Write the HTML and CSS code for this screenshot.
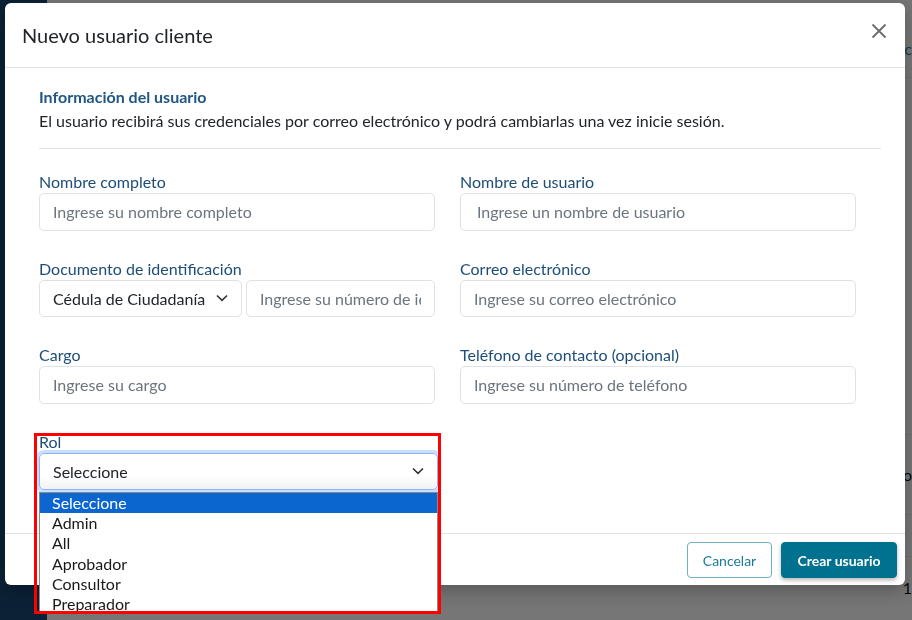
FILE: index.html
```html
<!DOCTYPE html>
<html lang="es">
<head>
    <meta charset="UTF-8">
    <meta name="viewport" content="width=device-width, initial-scale=1.0">
    <title>Nuevo usuario cliente</title>
    <link rel="stylesheet" href="styles.css">
</head>
<body>
    <div class="app">
        <aside class="sidebar"></aside>
        <main class="page">
            <div class="page-row first">
                <span class="page-link">c</span>
            </div>
            <div class="page-row tall"></div>
            <div class="page-row mid">
                <span>o</span>
            </div>
            <div class="page-row thin"></div>
            <div class="page-row last">
                <span>1</span>
            </div>
        </main>
    </div>

    <div class="backdrop"></div>

    <div class="modal">
        <div class="modal-header">
            <h1 class="modal-title">Nuevo usuario cliente</h1>
            <button class="close-btn" aria-label="Cerrar">
                <svg width="16" height="16" viewBox="0 0 16 16">
                    <path d="M1.5 1.5 L14.5 14.5 M14.5 1.5 L1.5 14.5" stroke="#6b6b6b" stroke-width="1.8" fill="none"/>
                </svg>
            </button>
        </div>

        <div class="modal-body">
            <h2 class="section-title">Información del usuario</h2>
            <p class="section-text">El usuario recibirá sus credenciales por correo electrónico y podrá cambiarlas una vez inicie sesión.</p>
            <hr class="divider">

            <div class="form-grid">
                <div class="field">
                    <label>Nombre completo</label>
                    <input class="input" type="text" placeholder="Ingrese su nombre completo">
                </div>
                <div class="field">
                    <label>Nombre de usuario</label>
                    <input class="input indent" type="text" placeholder="Ingrese un nombre de usuario">
                </div>

                <div class="field">
                    <label>Documento de identificación</label>
                    <div class="doc-row">
                        <div class="input select doc-type">
                            <span>Cédula de Ciudadanía</span>
                            <svg class="chevron" width="12" height="8" viewBox="0 0 12 8">
                                <path d="M1 1.5 L6 6.3 L11 1.5" stroke="#333" stroke-width="1.6" fill="none"/>
                            </svg>
                        </div>
                        <input class="input doc-number" type="text" placeholder="Ingrese su número de identificación">
                    </div>
                </div>
                <div class="field">
                    <label>Correo electrónico</label>
                    <input class="input" type="email" placeholder="Ingrese su correo electrónico">
                </div>

                <div class="field">
                    <label>Cargo</label>
                    <input class="input" type="text" placeholder="Ingrese su cargo">
                </div>
                <div class="field">
                    <label>Teléfono de contacto (opcional)</label>
                    <input class="input" type="tel" placeholder="Ingrese su número de teléfono">
                </div>

                <div class="field rol-field">
                    <label>Rol</label>
                    <div class="input select focused">
                        <span>Seleccione</span>
                        <svg class="chevron" width="12" height="8" viewBox="0 0 12 8">
                            <path d="M1 1.5 L6 6.3 L11 1.5" stroke="#333" stroke-width="1.6" fill="none"/>
                        </svg>
                    </div>
                    <ul class="options">
                        <li class="selected">Seleccione</li>
                        <li>Admin</li>
                        <li>All</li>
                        <li>Aprobador</li>
                        <li>Consultor</li>
                        <li>Preparador</li>
                    </ul>
                    <div class="highlight-box"></div>
                </div>
            </div>
        </div>

        <div class="modal-footer">
            <button class="btn btn-outline">Cancelar</button>
            <button class="btn btn-primary">Crear usuario</button>
        </div>
    </div>
</body>
</html>
```

FILE: styles.css
```css
* {
    box-sizing: border-box;
}
html, body {
    margin: 0;
    height: 100%;
    overflow: hidden;
}
body {
    font-family: Lato, "Open Sans", sans-serif;
    font-size: 16px;
    color: #212529;
}

/* page behind the modal */
.app {
    display: flex;
    height: 100%;
}
.sidebar {
    width: 47px;
    background: #18436c;
}
.page {
    flex: 1;
    background: #ececec;
    padding-top: 20px;
}
.page-row {
    display: flex;
    justify-content: flex-end;
    align-items: center;
    border-bottom: 1px solid #dcdcdc;
    font-size: 16px;
    color: #111;
}
.page-row.first {
    height: 58px;
}
.page-row.tall {
    height: 357px;
}
.page-row.mid {
    height: 80px;
}
.page-row.thin {
    height: 42px;
}
.page-row.last {
    height: 60px;
    border-bottom: none;
}
.page-link {
    color: #1b7fa0;
}
.backdrop {
    position: fixed;
    inset: 0;
    background: rgba(0, 0, 0, 0.5);
}

/* modal */
.modal {
    position: absolute;
    left: 5px;
    top: 3px;
    width: 900px;
    background: #fff;
    border-radius: 6px;
    box-shadow: 0 6px 18px rgba(0, 0, 0, 0.25);
}
.modal-header {
    display: flex;
    justify-content: space-between;
    align-items: center;
    height: 65px;
    padding: 0 18px 0 17px;
    border-bottom: 1px solid #dee2e6;
}
.modal-title {
    margin: 0;
    font-size: 20px;
    font-weight: 400;
    color: #212529;
}
.close-btn {
    border: none;
    background: none;
    padding: 0;
    margin-bottom: 9px;
    width: 16px;
    height: 16px;
    cursor: pointer;
}
.close-btn svg {
    display: block;
}

.modal-body {
    padding: 18px 24px 16px 34px;
}
.section-title {
    margin: 0;
    font-size: 16px;
    font-weight: 700;
    line-height: 22px;
    color: #1f5682;
}
.section-text {
    margin: 1px 0 0;
    line-height: 24px;
}
.divider {
    border: none;
    border-top: 1px solid #dee2e6;
    margin: 15px 0 22px;
}

.form-grid {
    display: grid;
    grid-template-columns: minmax(0, 1fr) minmax(0, 1fr);
}
.field {
    min-width: 0;
    padding-right: 25px;
    margin-bottom: 27px;
}
.field label {
    display: block;
    line-height: 22px;
    color: #1d4d78;
}
.input {
    width: 100%;
    height: 37.5px;
    display: flex;
    align-items: center;
    margin: 0;
    padding: 0 13px;
    border: 1px solid #dee2e6;
    border-radius: 5px;
    background: #fff;
    font-family: inherit;
    font-size: 16px;
    color: #212529;
    white-space: nowrap;
    overflow: hidden;
    outline: none;
}
.input::placeholder {
    color: #6c757d;
    opacity: 1;
}
.indent {
    padding-left: 16px;
}
.select {
    justify-content: space-between;
}
.chevron {
    flex-shrink: 0;
}
.doc-row {
    display: flex;
    gap: 4px;
}
.doc-type {
    width: 203px;
    flex-shrink: 0;
}
.doc-number {
    flex: 1;
    min-width: 0;
}

.rol-field {
    position: relative;
    padding-right: 22px;
}
.focused {
    border-color: #86b7fe;
    box-shadow: 0 0 0 3px rgba(13, 110, 253, 0.22);
    background: linear-gradient(#fff 60%, #f3f3f3);
}
.options {
    position: absolute;
    left: 0;
    top: 61.5px;
    width: 399px;
    height: 121px;
    margin: 0;
    padding: 0;
    list-style: none;
    background: #fff;
    border: 1px solid #8a8a8a;
    overflow: hidden;
    z-index: 2;
}
.options li {
    height: 20.2px;
    line-height: 20px;
    padding-left: 12px;
    color: #1a1a1a;
}
.options li.selected {
    background: #0b67cf;
    color: #fff;
}
.highlight-box {
    position: absolute;
    left: -5px;
    top: 2.5px;
    width: 407px;
    height: 181px;
    border: 3px solid #ff0000;
    z-index: 3;
    pointer-events: none;
}

.modal-footer {
    display: flex;
    justify-content: flex-end;
    gap: 9px;
    padding: 8px 8px 7px;
    border-top: 1px solid #dee2e6;
}
.btn {
    height: 36px;
    border-radius: 4px;
    font-family: inherit;
    font-size: 14px;
    cursor: pointer;
}
.btn-outline {
    width: 85px;
    background: #fff;
    border: 1px solid #6fb0c2;
    color: #187c98;
}
.btn-primary {
    width: 116px;
    background: #00718f;
    border: 1px solid #00718f;
    color: #fff;
    font-weight: 700;
    box-shadow: 0 2px 4px rgba(0, 0, 0, 0.3);
}
```
